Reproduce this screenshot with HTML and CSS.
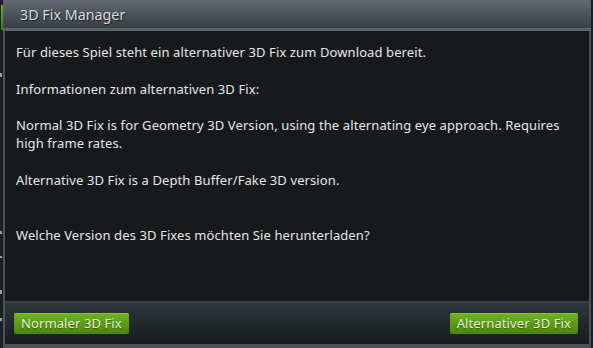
FILE: index.html
```html
<!DOCTYPE html>
<html lang="de">
<head>
<meta charset="utf-8">
<title>3D Fix Manager</title>
<link rel="stylesheet" href="styles.css">
</head>
<body>
<div class="screen">
  <div class="backdrop">
    <span class="bd-green"></span>
    <span class="bd-bit b1"></span>
    <span class="bd-bit b2"></span>
    <span class="bd-bit b3"></span>
    <span class="bd-bit b4"></span>
    <span class="bd-bit b5"></span>
  </div>
  <div class="dialog">
    <div class="titlebar"><span class="title">3D Fix Manager</span></div>
    <div class="content">
      <p>Für dieses Spiel steht ein alternativer 3D Fix zum Download bereit.</p>
      <p>Informationen zum alternativen 3D Fix:</p>
      <p>Normal 3D Fix is for Geometry 3D Version, using the alternating eye approach. Requires high frame rates.</p>
      <p>Alternative 3D Fix is a Depth Buffer/Fake 3D version.</p>
      <p class="gap2">Welche Version des 3D Fixes möchten Sie herunterladen?</p>
    </div>
    <div class="footer">
      <button class="btn">Normaler 3D Fix</button>
      <button class="btn">Alternativer 3D Fix</button>
    </div>
  </div>
  <div class="edge-right"></div>
</div>
</body>
</html>
```

FILE: styles.css
```css
html, body {
  margin: 0;
  padding: 0;
  width: 593px;
  height: 348px;
  overflow: hidden;
  background: #1b1e22;
}

.screen {
  display: flex;
  width: 593px;
  height: 348px;
}

.backdrop {
  position: relative;
  width: 3px;
  flex: none;
  background: #1c1f23;
}

.bd-green {
  position: absolute;
  left: 1px;
  top: 5px;
  width: 2px;
  height: 25px;
  background: linear-gradient(#6fae24, #3f7a12);
}

.bd-bit {
  position: absolute;
  left: 0;
  width: 2px;
  background: #9aa0a6;
}
.b1 { top: 73px; height: 4px; }
.b2 { top: 231px; height: 3px; }
.b3 { top: 256px; height: 2px; }
.b4 { top: 290px; height: 4px; }
.b5 { top: 318px; height: 3px; }

.edge-right {
  width: 2px;
  flex: none;
  background: #1b1e22;
}

.dialog {
  flex: 1;
  display: flex;
  flex-direction: column;
  background: #4a5157;
  padding: 0 2px 4px 2px;
  font-family: "Noto Sans", "Open Sans", sans-serif;
}

.titlebar {
  height: 28px;
  flex: none;
  display: flex;
  align-items: center;
  background: linear-gradient(#636971, #383e45);
  border-bottom: 3px solid #5a6168;
  margin: 0 -2px;
  padding-left: 17px;
}

.title {
  font-size: 14.3px;
  color: #d6dade;
  text-shadow: 1px 1px 1px rgba(0, 0, 0, 0.6);
}

.content {
  flex: 1;
  background: #171a1d;
  padding: 12px 10px 0 11px;
  color: #e4e6e8;
  font-size: 13px;
  line-height: 18.3px;
  letter-spacing: 0.1px;
}

.content p {
  margin: 0 0 18.3px 0;
}

.content p.gap2 {
  margin-top: 36.6px;
}

.footer {
  height: 41px;
  flex: none;
  display: flex;
  justify-content: space-between;
  align-items: center;
  padding: 0 11px 0 9px;
  border-top: 2px solid #3b4247;
  background: linear-gradient(#2f3639, #171b1e);
}

.btn {
  height: 21px;
  padding: 0 7px;
  border: none;
  border-radius: 2px;
  background: linear-gradient(#72b424, #5a9a14 55%, #4a860c);
  box-shadow: inset 0 1px 0 rgba(170, 220, 110, 0.35);
  color: #e6f0dc;
  font-family: "Noto Sans", "Open Sans", sans-serif;
  font-size: 13px;
  letter-spacing: 0.1px;
  line-height: 21px;
  text-shadow: 0 1px 1px rgba(0, 0, 0, 0.35);
}
```
